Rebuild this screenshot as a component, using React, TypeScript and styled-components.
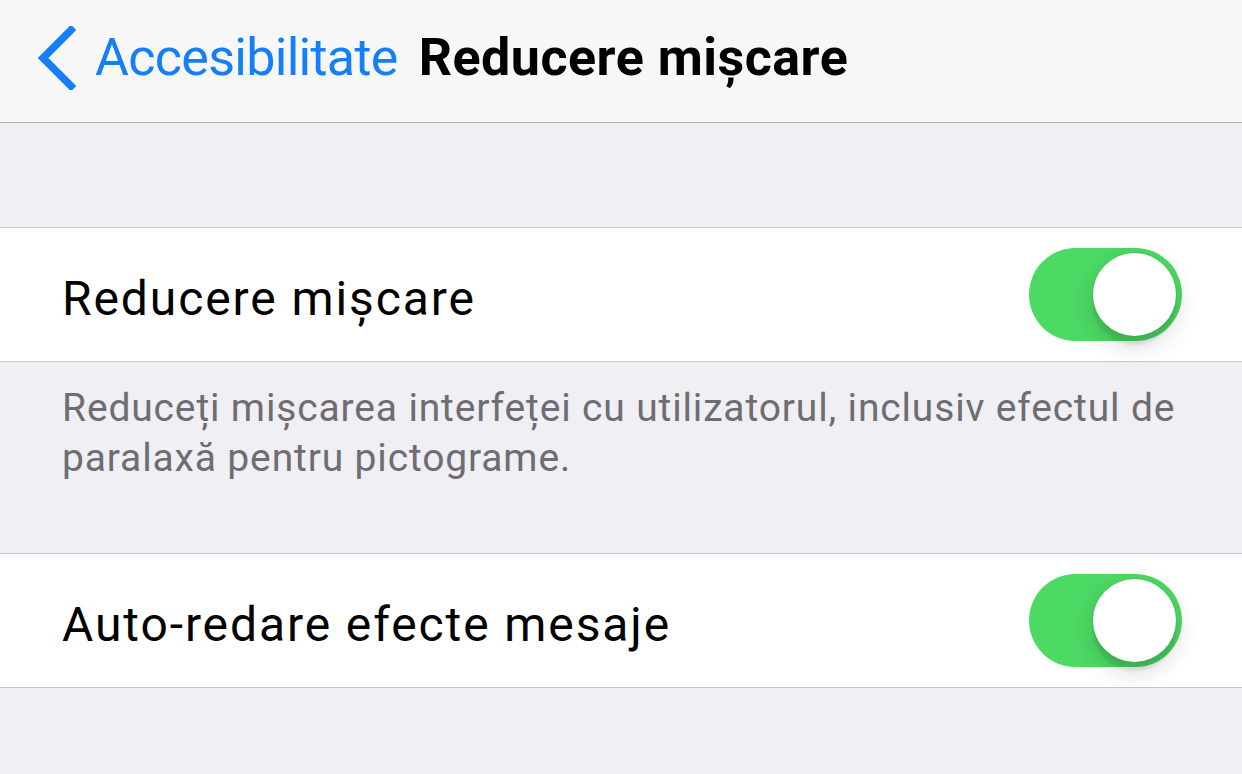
import React from 'react';
import styled, { createGlobalStyle } from 'styled-components';

const GlobalStyle = createGlobalStyle`
  html, body {
    margin: 0;
    padding: 0;
    background: #efeff4;
    font-family: Roboto, "Liberation Sans", sans-serif;
    -webkit-font-smoothing: antialiased;
  }
`;

const Screen = styled.div`
  width: 1242px;
  height: 774px;
  overflow: hidden;
  background: #efeff4;
`;

const NavBar = styled.header`
  height: 123px;
  box-sizing: border-box;
  display: flex;
  align-items: center;
  padding: 0 0 7px 37px;
  background: #f7f7f8;
  border-bottom: 1px solid #b2b2b2;
`;

const BackButton = styled.button`
  display: flex;
  align-items: center;
  gap: 19px;
  border: 0;
  padding: 0;
  background: none;
  color: #157efb;
  font-family: inherit;
  font-size: 52px;
  letter-spacing: -0.7px;
  cursor: pointer;
`;

const Title = styled.h1`
  margin: 0 0 0 21px;
  font-size: 52px;
  font-weight: 700;
  letter-spacing: 0.5px;
  color: #000;
`;

const Spacer = styled.div<{ $h: number }>`
  height: ${(p) => p.$h}px;
`;

const Group = styled.section`
  background: #fff;
  border-top: 1px solid #c8c7cc;
  border-bottom: 1px solid #c8c7cc;
`;

const Row = styled.div`
  height: 133px;
  box-sizing: border-box;
  display: flex;
  align-items: center;
  justify-content: space-between;
  padding: 0 60px 0 62px;
`;

const Label = styled.span`
  padding-top: 7px;
  font-size: 48px;
  letter-spacing: 1.9px;
  color: #000;
`;

const Footer = styled.p`
  margin: 0;
  padding: 21px 62px 70px;
  font-size: 39px;
  line-height: 50px;
  letter-spacing: 0.85px;
  color: #6d6d72;
`;

const Track = styled.div<{ $on: boolean }>`
  position: relative;
  width: 153px;
  height: 93px;
  border-radius: 47px;
  background: ${(p) => (p.$on ? '#4cd964' : '#e5e5ea')};
`;

const Knob = styled.span<{ $on: boolean }>`
  position: absolute;
  top: 5px;
  left: ${(p) => (p.$on ? '64px' : '5px')};
  width: 83px;
  height: 83px;
  border-radius: 50%;
  background: #fff;
  box-shadow: 0 9px 3px rgba(0, 0, 0, 0.08), 0 9px 24px rgba(0, 0, 0, 0.16), 0 0 0 1px rgba(0, 0, 0, 0.03);
`;

const Toggle: React.FC<{ on: boolean }> = ({ on }) => (
  <Track $on={on}>
    <Knob $on={on} />
  </Track>
);

const Chevron = () => (
  <svg width="39" height="64" viewBox="0 0 39 64">
    <path d="M34 4 L6 32 L34 60" fill="none" stroke="#157efb" strokeWidth="7.5" strokeLinecap="square" strokeLinejoin="miter" />
  </svg>
);

const App: React.FC = () => {
  return (
    <Screen>
      <GlobalStyle />
      <NavBar>
        <BackButton>
          <Chevron />
          Accesibilitate
        </BackButton>
        <Title>Reducere mișcare</Title>
      </NavBar>
      <Spacer $h={104} />
      <Group>
        <Row>
          <Label>Reducere mișcare</Label>
          <Toggle on />
        </Row>
      </Group>
      <Footer>
        Reduceți mișcarea interfeței cu utilizatorul, inclusiv efectul de paralaxă pentru pictograme.
      </Footer>
      <Group>
        <Row>
          <Label>Auto-redare efecte mesaje</Label>
          <Toggle on />
        </Row>
      </Group>
    </Screen>
  );
};

export default App;
